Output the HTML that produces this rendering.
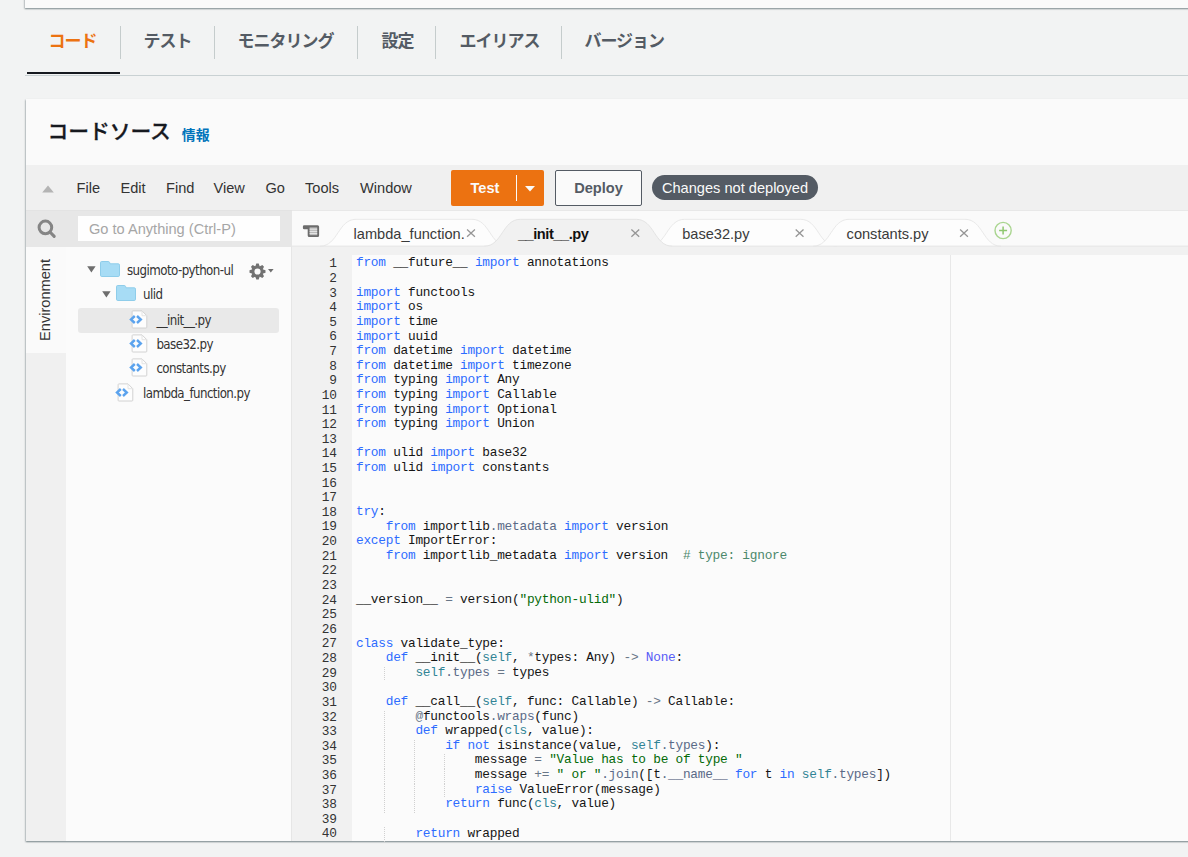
<!DOCTYPE html>
<html lang="ja">
<head>
<meta charset="utf-8">
<title>Lambda</title>
<style>
*{box-sizing:border-box;margin:0;padding:0}
html,body{width:1188px;height:857px;overflow:hidden;background:#f2f3f3}
body{position:relative;font-family:"Liberation Sans","Noto Sans CJK JP",sans-serif;color:#16191f}
.abs{position:absolute}
#toppanel{left:24.6px;top:-30px;width:1300px;height:37.7px;background:#fafafa;box-shadow:0 1px 1.5px 0 rgba(0,28,36,.38),-1px 1px 1.5px 0 rgba(0,28,36,.15)}
#tabs{left:25px;top:18px;width:1300px;height:58px;border-bottom:1px solid #c9d1d3}
.tab{position:absolute;top:0.8px;height:46px;line-height:46px;font-size:17px;letter-spacing:-1px;margin-left:-0.6px;font-weight:700;color:#545b64;white-space:nowrap}
.tab.active{color:#ec7211}
.tsep{position:absolute;top:8px;width:1px;height:33px;background:#c5cccc}
#tabline{left:27px;top:72px;width:92.7px;height:2px;background:#16191f}
#panel{left:26px;top:99px;width:1300px;height:742px;background:#fafafa;box-shadow:0 1px 1.5px 0 rgba(0,28,36,.4),-1px 1px 1.5px 0 rgba(0,28,36,.16)}
#ptitle{left:47.6px;top:116.8px;font-size:20.8px;letter-spacing:-0.1px;font-weight:500;-webkit-text-stroke:0.3px #16191f;line-height:30px;color:#16191f;white-space:nowrap}
#pinfo{left:181.8px;top:126.7px;font-size:13.9px;font-weight:700;line-height:16px;color:#0073bb;white-space:nowrap}
#menubar{left:26px;top:165px;width:1300px;height:45px;background:#f0f0f0}
.mi{position:absolute;top:178.5px;font-size:14.6px;line-height:18px;color:#333;white-space:nowrap}
#btest{left:451px;top:170px;width:93px;height:36px;background:#ec7211;border-radius:2px;color:#fafafa;font-weight:700;font-size:14.6px;line-height:37px;white-space:nowrap}
#bdeploy{left:555px;top:170px;width:87px;height:36px;background:#fafafa;border:1px solid #545b64;border-radius:2px;color:#545b64;font-weight:700;font-size:14.6px;line-height:35px;text-align:center;white-space:nowrap}
#pill{left:652px;top:175.3px;width:166px;height:25.2px;background:#545b64;border-radius:13px;color:#fafafa;font-size:14.6px;line-height:26.5px;text-align:center;white-space:nowrap}
#searchrow{left:26px;top:210px;width:266px;height:36.5px;background:#e7e7e7;border-top:1px solid #e3e3e3}
#searchbox{left:78px;top:216px;width:202px;height:25px;background:#fefefe;font-size:14.6px;line-height:26.6px;padding-left:11px;color:#a6a6a6;white-space:nowrap}
#envtab{left:26px;top:246.5px;width:40px;height:106px;background:#fafafa}
#envrest{left:26px;top:352.5px;width:40px;height:488.5px;background:#f0f0f0}
#tree{left:66px;top:246.5px;width:225px;height:594.5px;background:#fbfbfb}
#split{left:291px;top:246px;width:1px;height:595px;background:#e6e6e6}
#edtabs{left:292px;top:210px;width:1000px;height:36.5px;background:#fafafa;border-top:1px solid #e8e8e8}
#gutter{left:292px;top:255px;width:60px;height:586px;background:#f1f1f1}
#code{left:352px;top:255px;width:900px;height:586px;background:#fbfbfb}
#edtop{left:292px;top:246.5px;width:1000px;height:9px;background:#f1f1f1}
#margin{left:950px;top:255px;width:1px;height:586px;background:#e8e8e8}
.tl{position:absolute;font-family:"DejaVu Sans Condensed","DejaVu Sans",sans-serif;font-stretch:condensed;font-size:13.2px;letter-spacing:-0.57px;line-height:18px;color:#333;white-space:nowrap}
#envlabel{left:2.5px;top:291px;width:83px;height:18px;line-height:18px;font-size:14.6px;color:#333;text-align:center;transform:rotate(-90deg);white-space:nowrap}
.et{position:absolute;top:225px;font-size:14.6px;line-height:18px;color:#3a3a3a;white-space:nowrap}
.et.act{font-weight:700;color:#111;letter-spacing:-0.45px}
.ln,.cl{position:absolute;font-family:"Liberation Mono",monospace;font-size:12.8px;letter-spacing:-0.25px;line-height:14.62px;white-space:pre;color:#151515}
.ln{left:290.6px;width:46px;text-align:right;color:#333}
.cl{left:356px}
.cl b{font-weight:400}
.ig{position:absolute;width:1px;height:14.62px;background:repeating-linear-gradient(to bottom,#d0d0d0 0,#d0d0d0 1px,transparent 1px,transparent 2px)}
.k{color:#2d6cff}.s{color:#036a07}.c{color:#4c886b}.o{color:#687687}.v{color:#318495}.n{color:#585cf6}.f{color:#5a6a87}
</style>
</head>
<body>
<div id="toppanel" class="abs"></div>
<div id="tabs" class="abs">
  <div class="tab active" style="left:24px">コード</div>
  <div class="tsep" style="left:95px"></div>
  <div class="tab" style="left:119px">テスト</div>
  <div class="tsep" style="left:189px"></div>
  <div class="tab" style="left:213px">モニタリング</div>
  <div class="tsep" style="left:332px"></div>
  <div class="tab" style="left:357px">設定</div>
  <div class="tsep" style="left:410px"></div>
  <div class="tab" style="left:435px">エイリアス</div>
  <div class="tsep" style="left:536px"></div>
  <div class="tab" style="left:560px">バージョン</div>
</div>
<div id="tabline" class="abs"></div>
<div id="panel" class="abs"></div>
<div id="ptitle" class="abs">コードソース</div>
<div id="pinfo" class="abs">情報</div>
<div id="menubar" class="abs"></div>
<div id="searchrow" class="abs"></div>
<div id="searchbox" class="abs">Go to Anything (Ctrl-P)</div>
<div id="envtab" class="abs"></div>
<div id="envrest" class="abs"></div>
<div id="tree" class="abs"></div>
<div id="split" class="abs"></div>
<div id="edtabs" class="abs"></div>
<div id="edtop" class="abs"></div>
<div id="gutter" class="abs"></div>
<div id="code" class="abs"></div>
<div id="margin" class="abs"></div>
<!--MENU-->
<svg class="abs" style="left:42px;top:185px" width="12" height="8" viewBox="0 0 12 8"><path d="M6 0.5 L11.8 7.5 L0.2 7.5 Z" fill="#b4b4b4"/></svg>
<div class="mi" style="left:76.5px">File</div>
<div class="mi" style="left:120.5px">Edit</div>
<div class="mi" style="left:166px">Find</div>
<div class="mi" style="left:213.5px">View</div>
<div class="mi" style="left:265.5px">Go</div>
<div class="mi" style="left:305px">Tools</div>
<div class="mi" style="left:360px">Window</div>
<div id="btest" class="abs"><span class="abs" style="left:19.5px;top:0">Test</span><i class="abs" style="left:65px;top:5px;width:1px;height:26px;background:#fafafa"></i><svg class="abs" style="left:74px;top:16px" width="10" height="6" viewBox="0 0 10 6"><path d="M0 0 H10 L5 5.6 Z" fill="#fafafa"/></svg></div>
<div id="bdeploy" class="abs">Deploy</div>
<div id="pill" class="abs">Changes not deployed</div>
<svg class="abs" style="left:37px;top:219px" width="20" height="20" viewBox="0 0 20 20"><circle cx="8.4" cy="8.4" r="6.3" fill="none" stroke="#858585" stroke-width="3"/><path d="M13.2 13.2 L17.2 17.4" stroke="#858585" stroke-width="3.1" stroke-linecap="round"/></svg>

<!--/MENU-->
<!--TREE-->
<div id="envlabel" class="abs">Environment</div>
<div class="abs" style="left:78px;top:308px;width:201px;height:24.5px;background:#e9e9e9;border-radius:3px"></div>
<svg class="abs" style="left:87px;top:266.1px" width="9" height="7" viewBox="0 0 9 7"><path d="M0.2 0.2 H8.6 L4.4 6.6 Z" fill="#6e6e6e"/></svg>
<svg class="abs" style="left:100px;top:261.1px" width="20" height="16" viewBox="0 0 20 16"><path d="M1.6 0.5 H8.2 Q9.4 0.5 9.7 1.7 L9.9 2.8 H18.2 Q19.5 2.8 19.5 4.1 V14.2 Q19.5 15.5 18.2 15.5 H1.8 Q0.5 15.5 0.5 14.2 V1.8 Q0.5 0.5 1.6 0.5 Z" fill="#a7dcf5" stroke="#8fcdea" stroke-width="1"/></svg>
<div class="tl" style="left:127px;top:261.9px">sugimoto-python-ul</div>
<svg class="abs" style="left:102px;top:291.1px" width="9" height="7" viewBox="0 0 9 7"><path d="M0.2 0.2 H8.6 L4.4 6.6 Z" fill="#6e6e6e"/></svg>
<svg class="abs" style="left:116px;top:285.1px" width="20" height="16" viewBox="0 0 20 16"><path d="M1.6 0.5 H8.2 Q9.4 0.5 9.7 1.7 L9.9 2.8 H18.2 Q19.5 2.8 19.5 4.1 V14.2 Q19.5 15.5 18.2 15.5 H1.8 Q0.5 15.5 0.5 14.2 V1.8 Q0.5 0.5 1.6 0.5 Z" fill="#a7dcf5" stroke="#8fcdea" stroke-width="1"/></svg>
<div class="tl" style="left:143px;top:285.9px">ulid</div>
<svg class="abs" style="left:128.4px;top:309.7px" width="20" height="19" viewBox="0 0 20 19"><path d="M4.9 0.9 H14.0 L18.8 5.7 V17.2 Q18.8 18 18.0 18 H4.9 Q4.1 18 4.1 17.2 V1.7 Q4.1 0.9 4.9 0.9 Z" fill="#fdfdfd" stroke="#d2d2d2" stroke-width="1"/><path d="M14.0 1.2 V5.7 H18.6" fill="none" stroke="#e4e4e4" stroke-width="1"/><path d="M6.8 6.0 L3.0 9.5 L6.8 13.0 M9.0 6.0 L12.8 9.5 L9.0 13.0" fill="none" stroke="#5ba3ee" stroke-width="2.4" stroke-linejoin="miter"/></svg>
<div class="tl" style="left:156.4px;top:311.9px">__init__.py</div>
<svg class="abs" style="left:128.4px;top:334.2px" width="20" height="19" viewBox="0 0 20 19"><path d="M4.9 0.9 H14.0 L18.8 5.7 V17.2 Q18.8 18 18.0 18 H4.9 Q4.1 18 4.1 17.2 V1.7 Q4.1 0.9 4.9 0.9 Z" fill="#fdfdfd" stroke="#d2d2d2" stroke-width="1"/><path d="M14.0 1.2 V5.7 H18.6" fill="none" stroke="#e4e4e4" stroke-width="1"/><path d="M6.8 6.0 L3.0 9.5 L6.8 13.0 M9.0 6.0 L12.8 9.5 L9.0 13.0" fill="none" stroke="#5ba3ee" stroke-width="2.4" stroke-linejoin="miter"/></svg>
<div class="tl" style="left:156.4px;top:336.4px">base32.py</div>
<svg class="abs" style="left:128.4px;top:358.2px" width="20" height="19" viewBox="0 0 20 19"><path d="M4.9 0.9 H14.0 L18.8 5.7 V17.2 Q18.8 18 18.0 18 H4.9 Q4.1 18 4.1 17.2 V1.7 Q4.1 0.9 4.9 0.9 Z" fill="#fdfdfd" stroke="#d2d2d2" stroke-width="1"/><path d="M14.0 1.2 V5.7 H18.6" fill="none" stroke="#e4e4e4" stroke-width="1"/><path d="M6.8 6.0 L3.0 9.5 L6.8 13.0 M9.0 6.0 L12.8 9.5 L9.0 13.0" fill="none" stroke="#5ba3ee" stroke-width="2.4" stroke-linejoin="miter"/></svg>
<div class="tl" style="left:156.4px;top:360.4px">constants.py</div>
<svg class="abs" style="left:114px;top:382.7px" width="20" height="19" viewBox="0 0 20 19"><path d="M4.9 0.9 H14.0 L18.8 5.7 V17.2 Q18.8 18 18.0 18 H4.9 Q4.1 18 4.1 17.2 V1.7 Q4.1 0.9 4.9 0.9 Z" fill="#fdfdfd" stroke="#d2d2d2" stroke-width="1"/><path d="M14.0 1.2 V5.7 H18.6" fill="none" stroke="#e4e4e4" stroke-width="1"/><path d="M6.8 6.0 L3.0 9.5 L6.8 13.0 M9.0 6.0 L12.8 9.5 L9.0 13.0" fill="none" stroke="#5ba3ee" stroke-width="2.4" stroke-linejoin="miter"/></svg>
<div class="tl" style="left:143px;top:384.9px">lambda_function.py</div>
<svg class="abs" style="left:248.5px;top:262.5px" width="17" height="17" viewBox="-8.5 -8.5 17 17"><g fill="#727272"><path d="M-2.2 -5 L-1.2 -8 H1.2 L2.2 -5 Z" transform="rotate(0)"/><path d="M-2.2 -5 L-1.2 -8 H1.2 L2.2 -5 Z" transform="rotate(45)"/><path d="M-2.2 -5 L-1.2 -8 H1.2 L2.2 -5 Z" transform="rotate(90)"/><path d="M-2.2 -5 L-1.2 -8 H1.2 L2.2 -5 Z" transform="rotate(135)"/><path d="M-2.2 -5 L-1.2 -8 H1.2 L2.2 -5 Z" transform="rotate(180)"/><path d="M-2.2 -5 L-1.2 -8 H1.2 L2.2 -5 Z" transform="rotate(225)"/><path d="M-2.2 -5 L-1.2 -8 H1.2 L2.2 -5 Z" transform="rotate(270)"/><path d="M-2.2 -5 L-1.2 -8 H1.2 L2.2 -5 Z" transform="rotate(315)"/></g><circle r="4.45" fill="none" stroke="#727272" stroke-width="2.7"/></svg>
<svg class="abs" style="left:267.5px;top:269px" width="6" height="4" viewBox="0 0 6 4"><path d="M0 0 H5.6 L2.8 3.6 Z" fill="#6f6f6f"/></svg>
<!--/TREE-->
<!--EDTABS-->
<svg class="abs" style="left:292px;top:210px" width="896" height="37" viewBox="0 0 896 37"><path d="M28 36.2 C46 36.2 46 9.3 64 9.3 H180 C198 9.3 198 36.2 216 36.2" fill="#fdfdfd" stroke="#e9e9e9" stroke-width="1"/><path d="M356.6 36.2 C374.6 36.2 374.6 9.3 392.6 9.3 H508.6 C526.6 9.3 526.6 36.2 544.6 36.2" fill="#fdfdfd" stroke="#e9e9e9" stroke-width="1"/><path d="M521 36.2 C539 36.2 539 9.3 557 9.3 H673 C691 9.3 691 36.2 709 36.2" fill="#fdfdfd" stroke="#e9e9e9" stroke-width="1"/><path d="M0 36.2 H896" stroke="#e2e2e2" stroke-width="1"/><path d="M192.3 36.2 C210.3 36.2 210.3 9.3 228.3 9.3 H344.3 C362.3 9.3 362.3 36.2 380.3 36.2 V37 H192.3 Z" fill="#f1f1f1" stroke="none"/><path d="M192.3 36.2 C210.3 36.2 210.3 9.3 228.3 9.3 H344.3 C362.3 9.3 362.3 36.2 380.3 36.2" fill="none" stroke="#e4e4e4" stroke-width="1"/><path d="M12.2 15.3 H25.6 Q27.1 15.3 27.1 16.8 V25.5 Q27.1 27 25.6 27 H17.2 Q15.7 27 15.7 25.5 V19.2 H12.2 Q10.9 19.2 10.9 17.9 V16.6 Q10.9 15.3 12.2 15.3 Z" fill="#6c6c6c"/><rect x="17.6" y="17.4" width="7.6" height="7.8" fill="#b9b9b9"/><path d="M17.6 19.2 H25.2" stroke="#ededed" stroke-width="0.9"/><path d="M17.6 21.4 H25.2" stroke="#ededed" stroke-width="0.9"/><path d="M17.6 23.6 H25.2" stroke="#ededed" stroke-width="0.9"/><path d="M175.1 19.6 L182.9 26.8 M182.9 19.6 L175.1 26.8" stroke="#969696" stroke-width="1.3" fill="none"/><path d="M339.4 19.6 L347.2 26.8 M347.2 19.6 L339.4 26.8" stroke="#969696" stroke-width="1.3" fill="none"/><path d="M503.7 19.6 L511.5 26.8 M511.5 19.6 L503.7 26.8" stroke="#969696" stroke-width="1.3" fill="none"/><path d="M668.1 19.6 L675.9 26.8 M675.9 19.6 L668.1 26.8" stroke="#969696" stroke-width="1.3" fill="none"/><circle cx="711.1" cy="20.5" r="8.1" fill="none" stroke="#a9d58f" stroke-width="1.4"/><path d="M707.1 20.5 H715.1 M711.1 16.5 V24.5" stroke="#8ec76f" stroke-width="1.5"/></svg>
<div class="et" style="left:353.6px">lambda_function.</div>
<div class="et act" style="left:517.9px">__init__.py</div>
<div class="et" style="left:682.2px">base32.py</div>
<div class="et" style="left:846.6px">constants.py</div>
<!--/EDTABS-->
<!--CODE-->
<div class="ln" style="top:257.3px">1</div>
<div class="cl" style="top:256.4px"><b class="k">from</b> __future__ <b class="k">import</b> annotations</div>
<div class="ln" style="top:271.92px">2</div>
<div class="ln" style="top:286.54px">3</div>
<div class="cl" style="top:285.64px"><b class="k">import</b> functools</div>
<div class="ln" style="top:301.16px">4</div>
<div class="cl" style="top:300.26px"><b class="k">import</b> os</div>
<div class="ln" style="top:315.78px">5</div>
<div class="cl" style="top:314.88px"><b class="k">import</b> time</div>
<div class="ln" style="top:330.4px">6</div>
<div class="cl" style="top:329.5px"><b class="k">import</b> uuid</div>
<div class="ln" style="top:345.02px">7</div>
<div class="cl" style="top:344.12px"><b class="k">from</b> datetime <b class="k">import</b> datetime</div>
<div class="ln" style="top:359.64px">8</div>
<div class="cl" style="top:358.74px"><b class="k">from</b> datetime <b class="k">import</b> timezone</div>
<div class="ln" style="top:374.26px">9</div>
<div class="cl" style="top:373.36px"><b class="k">from</b> typing <b class="k">import</b> Any</div>
<div class="ln" style="top:388.88px">10</div>
<div class="cl" style="top:387.98px"><b class="k">from</b> typing <b class="k">import</b> Callable</div>
<div class="ln" style="top:403.5px">11</div>
<div class="cl" style="top:402.6px"><b class="k">from</b> typing <b class="k">import</b> Optional</div>
<div class="ln" style="top:418.12px">12</div>
<div class="cl" style="top:417.22px"><b class="k">from</b> typing <b class="k">import</b> Union</div>
<div class="ln" style="top:432.74px">13</div>
<div class="ln" style="top:447.36px">14</div>
<div class="cl" style="top:446.46px"><b class="k">from</b> ulid <b class="k">import</b> base32</div>
<div class="ln" style="top:461.98px">15</div>
<div class="cl" style="top:461.08px"><b class="k">from</b> ulid <b class="k">import</b> constants</div>
<div class="ln" style="top:476.6px">16</div>
<div class="ln" style="top:491.22px">17</div>
<div class="ln" style="top:505.84px">18</div>
<div class="cl" style="top:504.94px"><b class="k">try</b>:</div>
<div class="ln" style="top:520.46px">19</div>
<div class="cl" style="top:519.56px">    <b class="k">from</b> importlib<b class="f">.metadata</b> <b class="k">import</b> version</div>
<div class="ln" style="top:535.08px">20</div>
<div class="cl" style="top:534.18px"><b class="k">except</b> ImportError:</div>
<div class="ln" style="top:549.7px">21</div>
<div class="cl" style="top:548.8px">    <b class="k">from</b> importlib_metadata <b class="k">import</b> version  <b class="c"># type: ignore</b></div>
<div class="ln" style="top:564.32px">22</div>
<div class="ln" style="top:578.94px">23</div>
<div class="ln" style="top:593.56px">24</div>
<div class="cl" style="top:592.66px">__version__ <b class="o">=</b> version(<b class="s">"python-ulid"</b>)</div>
<div class="ln" style="top:608.18px">25</div>
<div class="ln" style="top:622.8px">26</div>
<div class="ln" style="top:637.42px">27</div>
<div class="cl" style="top:636.52px"><b class="k">class</b> validate_type:</div>
<div class="ln" style="top:652.04px">28</div>
<div class="cl" style="top:651.14px">    <b class="k">def</b> __init__(<b class="v">self</b>, <b class="o">*</b>types: Any) <b class="o">-&gt;</b> <b class="n">None</b>:</div>
<div class="ln" style="top:666.66px">29</div>
<i class="ig" style="left:384.22px;top:666.66px"></i>
<div class="cl" style="top:665.76px">        <b class="v">self</b><b class="f">.types</b> <b class="o">=</b> types</div>
<div class="ln" style="top:681.28px">30</div>
<div class="ln" style="top:695.9px">31</div>
<div class="cl" style="top:695px">    <b class="k">def</b> __call__(<b class="v">self</b>, func: Callable) <b class="o">-&gt;</b> Callable:</div>
<div class="ln" style="top:710.52px">32</div>
<i class="ig" style="left:384.22px;top:710.52px"></i>
<div class="cl" style="top:709.62px">        <b class="o">@</b>functools<b class="f">.wraps</b>(func)</div>
<div class="ln" style="top:725.14px">33</div>
<i class="ig" style="left:384.22px;top:725.14px"></i>
<div class="cl" style="top:724.24px">        <b class="k">def</b> wrapped(<b class="v">cls</b>, value):</div>
<div class="ln" style="top:739.76px">34</div>
<i class="ig" style="left:384.22px;top:739.76px"></i>
<i class="ig" style="left:413.94px;top:739.76px"></i>
<div class="cl" style="top:738.86px">            <b class="k">if</b> <b class="k">not</b> isinstance(value, <b class="v">self</b><b class="f">.types</b>):</div>
<div class="ln" style="top:754.38px">35</div>
<i class="ig" style="left:384.22px;top:754.38px"></i>
<i class="ig" style="left:413.94px;top:754.38px"></i>
<i class="ig" style="left:443.66px;top:754.38px"></i>
<div class="cl" style="top:753.48px">                message <b class="o">=</b> <b class="s">"Value has to be of type "</b></div>
<div class="ln" style="top:769px">36</div>
<i class="ig" style="left:384.22px;top:769px"></i>
<i class="ig" style="left:413.94px;top:769px"></i>
<i class="ig" style="left:443.66px;top:769px"></i>
<div class="cl" style="top:768.1px">                message <b class="o">+=</b> <b class="s">" or "</b><b class="f">.join</b>([t<b class="f">.__name__</b> <b class="k">for</b> t <b class="k">in</b> <b class="v">self</b><b class="f">.types</b>])</div>
<div class="ln" style="top:783.62px">37</div>
<i class="ig" style="left:384.22px;top:783.62px"></i>
<i class="ig" style="left:413.94px;top:783.62px"></i>
<i class="ig" style="left:443.66px;top:783.62px"></i>
<div class="cl" style="top:782.72px">                <b class="k">raise</b> ValueError(message)</div>
<div class="ln" style="top:798.24px">38</div>
<i class="ig" style="left:384.22px;top:798.24px"></i>
<i class="ig" style="left:413.94px;top:798.24px"></i>
<div class="cl" style="top:797.34px">            <b class="k">return</b> func(<b class="v">cls</b>, value)</div>
<div class="ln" style="top:812.86px">39</div>
<div class="ln" style="top:827.48px">40</div>
<i class="ig" style="left:384.22px;top:827.48px"></i>
<div class="cl" style="top:826.58px">        <b class="k">return</b> wrapped</div>
<!--/CODE-->
</body>
</html>
